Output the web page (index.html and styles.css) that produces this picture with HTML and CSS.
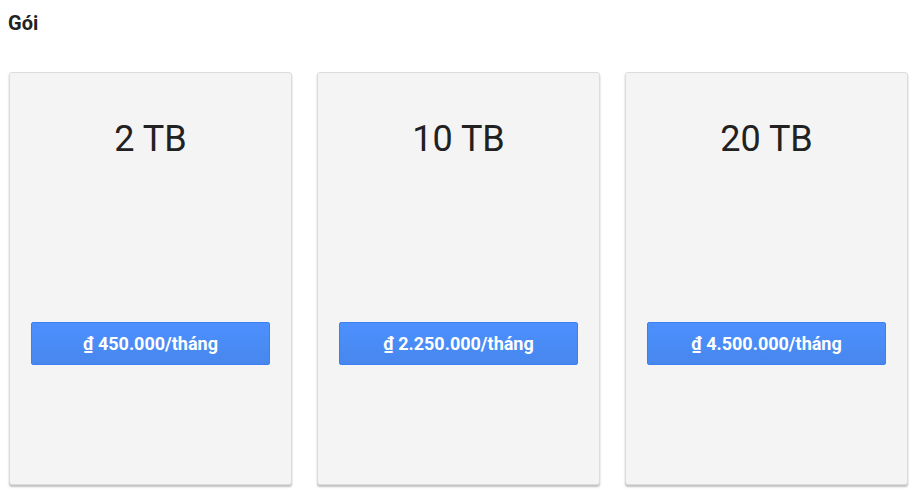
FILE: index.html
```html
<!doctype html>
<html lang="vi">
<head>
    <meta charset="UTF-8">
    <title>Gói</title>
    <link rel="stylesheet" href="styles.css">
</head>
<body>
    <h2 class="title">Gói</h2>

    <div class="plans">
        <div class="plan">
            <div class="plan-size">2 TB</div>
            <button class="plan-buy">₫ 450.000/tháng</button>
        </div>
        <div class="plan">
            <div class="plan-size">10 TB</div>
            <button class="plan-buy">₫ 2.250.000/tháng</button>
        </div>
        <div class="plan">
            <div class="plan-size">20 TB</div>
            <button class="plan-buy">₫ 4.500.000/tháng</button>
        </div>
    </div>
</body>
</html>
```

FILE: styles.css
```css
body {
    font-family: Roboto, 'Liberation Sans', sans-serif;
    margin: 0;
    padding: 8px;
    background-color: #fff;
    color: #212121;
}
.title {
    font-size: 20px;
    font-weight: bold;
    line-height: 24px;
    margin: 3px 0 0;
    color: #222;
}
.plans {
    display: grid;
    grid-template-columns: repeat(3, 283px);
    column-gap: 25px;
    margin: 37px 0 0 1px;
}
.plan {
    height: 413px;
    box-sizing: border-box;
    background-color: #f4f4f4;
    border: 1px solid #dcdcdc;
    border-radius: 3px;
    box-shadow: 0 2px 2px rgba(0,0,0,0.25);
    padding: 42px 21px 0;
    display: flex;
    flex-direction: column;
}
.plan-size {
    font-size: 36px;
    line-height: 48px;
    text-align: center;
    color: #212121;
}
.plan-buy {
    margin-top: 159px;
    height: 43px;
    width: 100%;
    border: 1px solid #3b7ff0;
    border-radius: 2px;
    background: linear-gradient(#4d90fe, #4787ed);
    color: #fff;
    font-family: Roboto, 'Liberation Sans', sans-serif;
    font-size: 18px;
    font-weight: bold;
    cursor: pointer;
}
```
